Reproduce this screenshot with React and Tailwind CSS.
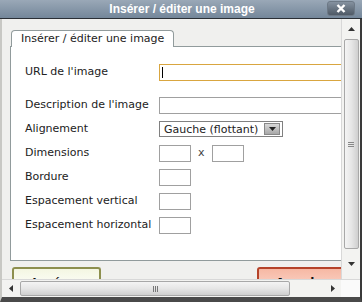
import React from 'react';

const font = { fontFamily: '"DejaVu Sans", Verdana, sans-serif' };

function Field({ label, children }) {
  return (
    <div className="flex items-center h-[24px]">
      <div className="w-[134px] text-[11px] text-[#222]">{label}</div>
      {children}
    </div>
  );
}

function Box({ w = 'w-[32px]' }) {
  return <div className={`${w} h-[17px] border border-[#a0a0a0] bg-white`} />;
}

export default function App() {
  return (
    <div className="w-[362px] h-[302px] flex flex-col bg-[#f0f0ee] overflow-hidden" style={font}>
      {/* Title bar */}
      <div className="h-[19px] shrink-0 flex items-center relative bg-gradient-to-b from-[#9aa8b7] to-[#74879a] border-b border-[#2a2f35]">
        <div className="flex-1 text-center text-white font-bold text-[12px] leading-none pl-[2px]" style={{ fontFamily: '"Liberation Sans", Arial, sans-serif' }}>
          Insérer / éditer une image
        </div>
        <div className="absolute right-[7px] top-[1px] w-[28px] h-[15px] rounded-[3px] bg-gradient-to-b from-[#8592a0] to-[#4f5a66] border border-[#6d7986] flex items-center justify-center">
          <svg width="10" height="9" viewBox="0 0 10 9">
            <path d="M1.5 1 L8.5 8 M8.5 1 L1.5 8" stroke="white" strokeWidth="2.4" />
          </svg>
        </div>
      </div>

      {/* Body */}
      <div className="flex-1 min-h-0 flex flex-col border-l-2 border-l-[#c8c8c4] border-r-2 border-r-[#3a3a3a] border-b-[5px] border-b-[#4a4a4a]">
        <div className="flex-1 flex min-h-0">
          {/* Content */}
          <div className="flex-1 overflow-hidden pt-[10px] pl-[8px]">
            <div className="w-[360px]">
              <div className="flex">
                <div className="ml-[1px] h-[17px] px-[9px] flex items-center bg-white border border-b-0 border-[#919b9c] rounded-t-[4px] text-[11px] text-[#222] relative top-[1px]">
                  Insérer / éditer une image
                </div>
              </div>
              <div className="h-[215px] bg-white border border-[#919b9c] pt-[13px] pl-[14px]">
                <div className="flex items-center h-[24px]">
                  <div className="w-[134px] text-[11px] text-[#222]">URL de l'image</div>
                  <div className="w-[210px] h-[17px] border border-[#d9a640] bg-white flex items-center pl-[2px]">
                    <div className="w-px h-[11px] bg-black" />
                  </div>
                </div>
                <div className="h-[9px]" />
                <Field label="Description de l'image">
                  <Box w="w-[210px]" />
                </Field>
                <Field label="Alignement">
                  <div className="w-[124px] h-[16px] border border-[#808080] bg-white flex items-center">
                    <span className="flex-1 pl-[4px] text-[11px] text-[#222] leading-none">Gauche (flottant)</span>
                    <div className="w-[16px] h-[12px] mr-[2px] bg-gradient-to-b from-[#d8d8d8] to-[#a8a8a8] border border-[#888] flex items-center justify-center">
                      <svg width="7" height="4" viewBox="0 0 7 4"><path d="M0 0 H7 L3.5 4 Z" fill="#222" /></svg>
                    </div>
                  </div>
                </Field>
                <Field label="Dimensions">
                  <Box />
                  <span className="mx-[7px] text-[11px] text-[#444]">x</span>
                  <Box />
                </Field>
                <Field label="Bordure">
                  <Box />
                </Field>
                <Field label="Espacement vertical">
                  <Box />
                </Field>
                <Field label="Espacement horizontal">
                  <Box />
                </Field>
              </div>
              <div className="flex mt-[6px] pl-[2px]">
                <div className="w-[89px] h-[24px] rounded-t-[3px] border-2 border-b-0 border-[#8d8f4e] bg-gradient-to-b from-[#f4f6e2] to-white text-[12px] font-bold text-center pt-[5px] text-[#111]">
                  Insérer
                </div>
                <div className="w-[156px]" />
                <div className="w-[90px] h-[24px] rounded-t-[3px] border-2 border-b-0 border-[#b5432a] bg-gradient-to-b from-[#f6b8a4] to-[#fbd8cc] text-[12px] font-bold text-center pt-[5px] text-[#111]">
                  Annuler
                </div>
              </div>
            </div>
          </div>

          {/* Vertical scrollbar */}
          <div className="w-[19px] flex flex-col items-center bg-[#f3f3f1] border-l border-[#d8d8d8]">
            <div className="h-[20px] flex items-center justify-center">
              <svg width="7" height="4" viewBox="0 0 7 4"><path d="M0 4 H7 L3.5 0 Z" fill="#333" /></svg>
            </div>
            <div className="w-[15px] flex-1 rounded-[2px] border border-[#a8a8a8] bg-gradient-to-r from-[#f4f4f4] via-[#e6e6e6] to-[#cfcfcf] flex items-center justify-center">
              <div className="flex flex-col gap-[1px]">
                <div className="w-[6px] h-px bg-[#888]" />
                <div className="w-[6px] h-px bg-[#888]" />
                <div className="w-[6px] h-px bg-[#888]" />
              </div>
            </div>
            <div className="h-[30px] flex items-center justify-center">
              <svg width="7" height="4" viewBox="0 0 7 4"><path d="M0 0 H7 L3.5 4 Z" fill="#333" /></svg>
            </div>
          </div>
        </div>

        {/* Horizontal scrollbar */}
        <div className="h-[18px] shrink-0 flex bg-[#f3f3f1] border-t border-[#d8d8d8]">
          <div className="w-[18px] flex items-center justify-center">
            <svg width="4" height="7" viewBox="0 0 4 7"><path d="M4 0 V7 L0 3.5 Z" fill="#333" /></svg>
          </div>
          <div className="w-[270px] h-[15px] mt-[1px] rounded-[2px] border border-[#a8a8a8] bg-gradient-to-b from-[#f4f4f4] via-[#e6e6e6] to-[#cfcfcf] flex items-center justify-center">
            <div className="flex gap-[1px]">
              <div className="w-px h-[6px] bg-[#777]" />
              <div className="w-px h-[6px] bg-[#777]" />
              <div className="w-px h-[6px] bg-[#777]" />
            </div>
          </div>
          <div className="flex-1 flex items-center justify-end pr-[6px]">
            <svg width="4" height="7" viewBox="0 0 4 7"><path d="M0 0 V7 L4 3.5 Z" fill="#333" /></svg>
          </div>
          <div className="w-[19px] bg-[#fafafa]" />
        </div>
      </div>
    </div>
  );
}
